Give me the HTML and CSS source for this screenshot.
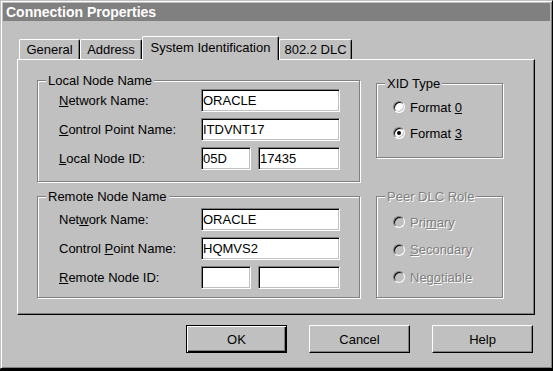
FILE: index.html
```html
<!DOCTYPE html>
<html lang="en">
<head>
    <meta charset="UTF-8">
    <title>Connection Properties</title>
    <link rel="stylesheet" href="styles.css">
</head>
<body>

    <div class="window">
        <div class="titlebar">Connection Properties</div>

        <div class="tabs">
            <div class="tab tab-general">General</div>
            <div class="tab tab-address">Address</div>
            <div class="tab tab-sysid selected">System Identification</div>
            <div class="tab tab-dlc">802.2 DLC</div>
        </div>

        <div class="panel">
            <fieldset class="group group-local">
                <legend>Local Node Name</legend>
                <div class="rows">
                    <div class="row">
                        <label for="localNet"><u>N</u>etwork Name:</label>
                        <input type="text" id="localNet" value="ORACLE">
                    </div>
                    <div class="row">
                        <label for="localCp"><u>C</u>ontrol Point Name:</label>
                        <input type="text" id="localCp" value="ITDVNT17">
                    </div>
                    <div class="row">
                        <label for="localId1"><u>L</u>ocal Node ID:</label>
                        <input type="text" id="localId1" class="id-short" value="05D">
                        <input type="text" id="localId2" class="id-long" value="17435">
                    </div>
                </div>
            </fieldset>

            <fieldset class="group group-xid">
                <legend>XID Type</legend>
                <div class="radios">
                    <div class="radio-row"><span class="radio"></span><span>Format <u>0</u></span></div>
                    <div class="radio-row"><span class="radio checked"></span><span>Format <u>3</u></span></div>
                </div>
            </fieldset>

            <fieldset class="group group-remote">
                <legend>Remote Node Name</legend>
                <div class="rows">
                    <div class="row">
                        <label for="remoteNet">Net<u>w</u>ork Name:</label>
                        <input type="text" id="remoteNet" value="ORACLE">
                    </div>
                    <div class="row">
                        <label for="remoteCp">Control <u>P</u>oint Name:</label>
                        <input type="text" id="remoteCp" value="HQMVS2">
                    </div>
                    <div class="row">
                        <label for="remoteId1"><u>R</u>emote Node ID:</label>
                        <input type="text" id="remoteId1" class="id-short" value="">
                        <input type="text" id="remoteId2" class="id-long" value="">
                    </div>
                </div>
            </fieldset>

            <fieldset class="group group-peer disabled">
                <legend>Peer DLC Role</legend>
                <div class="radios">
                    <div class="radio-row"><span class="radio"></span><span>Pri<u>m</u>ary</span></div>
                    <div class="radio-row"><span class="radio"></span><span><u>S</u>econdary</span></div>
                    <div class="radio-row"><span class="radio"></span><span>Neg<u>o</u>tiable</span></div>
                </div>
            </fieldset>
        </div>

        <div class="buttons">
            <button class="default">OK</button>
            <button>Cancel</button>
            <button>Help</button>
        </div>
    </div>

</body>
</html>
```

FILE: styles.css
```css
body {
    margin: 0;
    background-color: #000;
    font-family: "Liberation Sans", Arial, sans-serif;
    font-size: 13px;
    color: #000;
}

.window {
    width: 553px;
    height: 369px;
    box-sizing: border-box;
    padding: 2px;
    background-color: #c0c0c0;
    border: 1px solid;
    border-color: #c0c0c0 #000 #000 #c0c0c0;
    box-shadow: inset 1px 1px #fff, inset -1px -1px #808080;
}

.titlebar {
    height: 18px;
    line-height: 18px;
    padding-left: 3px;
    background-color: #808080;
    color: #fff;
    font-size: 14px;
    font-weight: bold;
}

/* tab strip */

.tabs {
    display: flex;
    align-items: flex-end;
    height: 23px;
    margin-top: 15px;
    margin-left: 16px;
}

.tab {
    box-sizing: border-box;
    height: 20px;
    padding-top: 2px;
    line-height: 16px;
    text-align: center;
    border-top: 1px solid #fff;
    border-left: 1px solid #fff;
    border-right: 1px solid #000;
    border-radius: 2px 2px 0 0;
    box-shadow: inset -1px 0 #808080;
}

.tab-general { width: 61px; }
.tab-address { width: 62px; }
.tab-sysid { width: 137px; }
.tab-dlc { width: 73px; }

.tab.selected {
    position: relative;
    z-index: 1;
    height: 24px;
    margin-bottom: -1px;
    padding-top: 3px;
    background-color: #c0c0c0;
}

/* page of the tab control */

.panel {
    display: grid;
    grid-template-columns: 323px 127px;
    grid-template-rows: 109px 109px;
    column-gap: 16px;
    row-gap: 7px;
    align-items: start;
    width: 518px;
    height: 256px;
    box-sizing: border-box;
    margin-left: 14px;
    padding: 13px 0 0 19px;
    border: 1px solid;
    border-color: #fff #000 #000 #fff;
    box-shadow: inset -1px -1px #808080;
}

.group {
    box-sizing: border-box;
    height: 109px;
    margin: 0;
    padding: 0;
    border: 1px solid #808080;
    box-shadow: 1px 1px 0 #fff, inset 1px 1px 0 #fff;
}

.group legend {
    margin-left: 8px;
    padding: 0 2px;
    line-height: 15px;
    background-color: #c0c0c0;
}

.group-xid {
    height: 82px;
    margin-top: 3px;
}

.rows {
    display: flex;
    flex-direction: column;
    gap: 6px;
    padding-left: 21px;
}

.group-local .rows { margin-top: 1px; }
.group-remote .rows { margin-top: 4px; }

.row {
    display: flex;
    align-items: center;
    height: 23px;
}

.row label {
    width: 142px;
}

.row input {
    width: 139px;
    height: 23px;
    box-sizing: border-box;
    margin: 0;
    padding: 0 1px;
    font-family: inherit;
    font-size: 13px;
    color: #000;
    background-color: #fff;
    border: 1px solid;
    border-color: #808080 #fff #fff #808080;
    box-shadow: inset 1px 1px #000, inset -1px -1px #c0c0c0;
    outline: none;
}

.row input.id-short {
    width: 50px;
    margin-right: 7px;
}

.row input.id-long {
    width: 82px;
}

/* radio buttons */

.radios {
    display: flex;
    flex-direction: column;
    padding-left: 16px;
}

.group-xid .radios {
    margin-top: 8px;
    gap: 10px;
}

.group-peer .radios {
    margin-top: 10px;
    gap: 11.5px;
}

.radio-row {
    display: flex;
    align-items: center;
    height: 16px;
}

.radio {
    position: relative;
    width: 12px;
    height: 12px;
    box-sizing: border-box;
    margin-right: 5px;
    border-radius: 50%;
    border: 1px solid;
    border-color: #808080 #fff #fff #808080;
    background-color: #fff;
    box-shadow: inset 1px 1px #000, inset -1px -1px #c0c0c0;
}

.radio.checked::after {
    content: "";
    position: absolute;
    left: 3px;
    top: 3px;
    width: 4px;
    height: 4px;
    border-radius: 50%;
    background-color: #000;
}

.disabled legend,
.disabled .radio-row {
    color: #808080;
    text-shadow: 1px 1px #fff;
}

.disabled .radio {
    background-color: #c0c0c0;
}

/* dialog buttons */

.buttons {
    display: flex;
    justify-content: flex-end;
    gap: 22px;
    width: 518px;
    box-sizing: border-box;
    margin: 10px 0 0 14px;
    padding-right: 2px;
}

button {
    width: 101px;
    height: 28px;
    padding: 0;
    font-family: inherit;
    font-size: 13px;
    color: #000;
    background-color: #c0c0c0;
    border: 1px solid;
    border-color: #fff #000 #000 #fff;
    box-shadow: inset -1px -1px #808080;
}

button.default {
    border-color: #000;
    box-shadow: inset 1px 1px #fff, inset -1px -1px #000, inset -2px -2px #808080;
}
```
